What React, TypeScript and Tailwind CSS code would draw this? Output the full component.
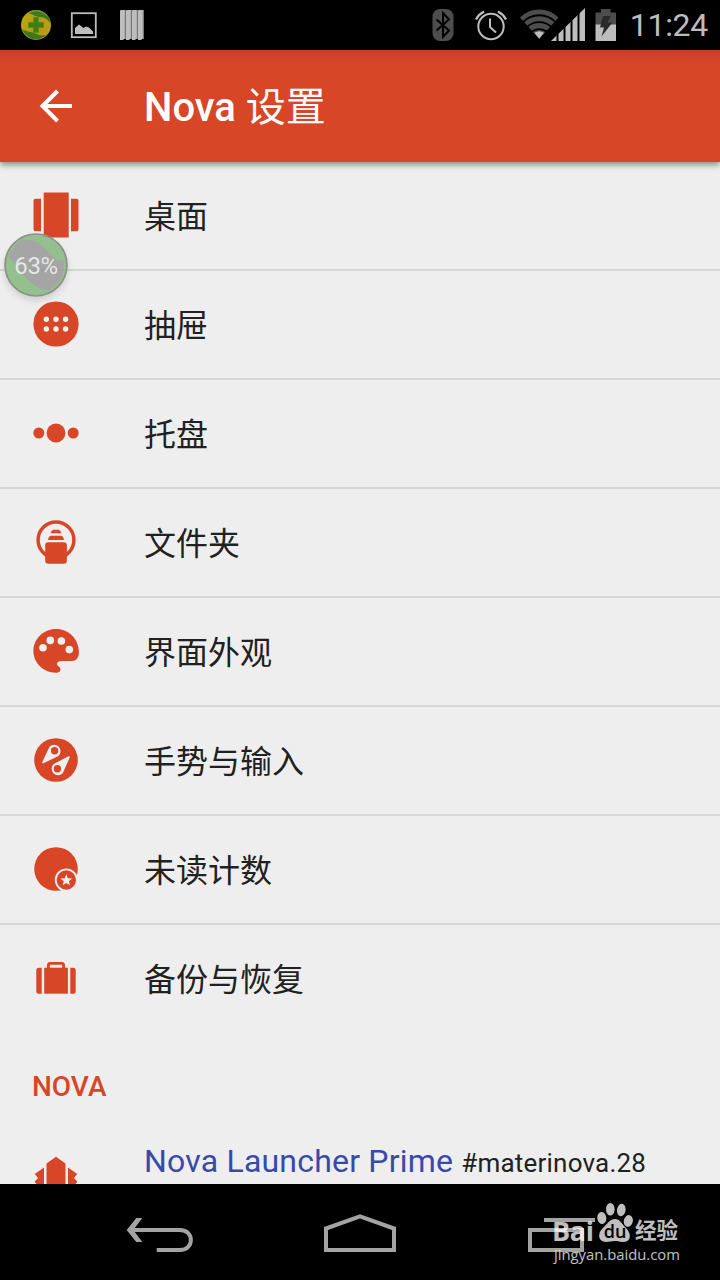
import React from 'react';

const StatusBar: React.FC = () => (
  <div className="h-[50px] bg-black flex items-center justify-between pl-5 pr-3 shrink-0">
    <div className="flex items-center gap-4">
      <svg width="32" height="32" viewBox="0 0 32 32">
        <defs>
          <radialGradient id="ball" cx="0.6" cy="0.6" r="0.7">
            <stop offset="0" stopColor="#c78f10" />
            <stop offset="0.6" stopColor="#b8a018" />
            <stop offset="1" stopColor="#b5a90c" />
          </radialGradient>
        </defs>
        <circle cx="16" cy="16" r="15" fill="url(#ball)" />
        <path d="M8 4C14-1 25 1 29 9c1 2 1 4 1 5-3-5-7-6-11-6-3 0-6-3-11-4Z" fill="#3a7a1c" />
        <path d="M2 20c4 3 8 2 12 4 5 2 7 3 12 2-5 5-13 6-18 2-3-3-5-5-6-8Z" fill="#3a7a1c" />
        <path d="M9 4C15 0 23 2 27 7" fill="none" stroke="#7fa23a" strokeWidth="1" />
        <path d="M13.500 8.500h5v5h5v5h-5v5h-5v-5h-5v-5h5Z" fill="#3f7d17" stroke="#5c8c14" strokeLinejoin="round" />
      </svg>
      <svg width="32" height="32" viewBox="0 0 32 32">
        <rect x="3.800" y="4.200" width="24" height="24" fill="none" stroke="#bdbdbd" strokeWidth="1.800" />
        <path d="M7 25v-6l4-3.500 4.500 3.500 2.500-1.500 3 1 4 4V25Z" fill="#bdbdbd" />
      </svg>
      <svg width="32" height="32" viewBox="0 0 32 32">
        {[4, 10, 16, 22].map((x) => (
          <g key={x}>
            <path d={`M${x} 1.500l1-.5h4.500v29h-1.500l-1 1h-3Z`} fill="#bdbdbd" />
            <path d={`M${x + 5.300} 1v29`} stroke="#7c7c7c" strokeWidth="1" />
          </g>
        ))}
      </svg>
    </div>
    <div className="flex items-center">
      <svg width="22" height="34" viewBox="0 0 22 34" className="mr-5">
        <rect x="0.500" y="1" width="21" height="32" rx="7.500" fill="#4d4d4d" />
        <path d="M4.500 11.500l12.500 11-6 6.500V5l6 6.500-12.500 11" fill="none" stroke="#000" strokeWidth="2" />
      </svg>
      <svg width="34" height="34" viewBox="0 0 34 34" className="mr-3">
        <circle cx="17" cy="18.500" r="12.700" fill="none" stroke="#bdbdbd" strokeWidth="2" />
        <path d="M16 10.500v8.500l6 5.500" fill="none" stroke="#bdbdbd" strokeWidth="2" />
        <path d="M2 11.500A19 19 0 0 1 10 3.500M24 3.500a19 19 0 0 1 8 8" fill="none" stroke="#bdbdbd" strokeWidth="2.500" />
      </svg>
      <svg width="66" height="34" viewBox="0 0 66 34" className="mr-[9px]">
        <path d="M0 9.500A27 27 0 0 1 38.500 9.500L19.200 31Z" fill="#4d4d4d" />
        <path d="M2.500 14.500A23 23 0 0 1 36 14.500M6.500 19.500a18 18 0 0 1 25.500 0M11 24.500a12 12 0 0 1 16.500 0" fill="none" stroke="#000" strokeWidth="1.800" />
        <path d="M14.500 24.800q4.700-3 9.400 0l-4.700 6Z" fill="#bdbdbd" />
        <path d="M31 33l34-33v33Z" fill="#bdbdbd" />
        <path d="M37.500 20v14M44.500 14v20M51.500 8v26M58.500 3v31" stroke="#000" strokeWidth="2" />
      </svg>
      <svg width="22" height="34" viewBox="0 0 22 34" className="mr-[13px]">
        <path d="M0.500 4.500h5.500V1h9.500v3.500h5.500V17H0.500Z" fill="#4d4d4d" />
        <path d="M0.500 16.500h20.500V33H0.500Z" fill="#bdbdbd" />
        <path d="M8 8h8l-3.500 6.500h5L6.500 28.500l2.500-9H5Z" fill="#2b2b2b" />
      </svg>
      <span className="text-[32px] leading-[52px] text-[#bdbdbd] tracking-[-0.3px]">11:24</span>
    </div>
  </div>
);

const Icon: React.FC<{ children: React.ReactNode }> = ({ children }) => (
  <svg width="48" height="48" viewBox="0 0 48 48" fill="#d74627" className="mt-[29px] shrink-0">
    {children}
  </svg>
);

const SETTINGS = [
  {
    label: '桌面',
    icon: (
      <>
        <path d="M9 7.700H3.500a2 2 0 0 0-2 2v28.600a2 2 0 0 0 2 2H9ZM39 7.700h5.500a2 2 0 0 1 2 2v28.600a2 2 0 0 1-2 2H39Z" />
        <rect x="11.700" y="1.500" width="25" height="45" />
      </>
    ),
  },
  {
    label: '抽屉',
    icon: (
      <>
        <circle cx="24" cy="24" r="22.600" />
        {[14.300, 24, 33.600].map((x) => (
          <g key={x} fill="#eee">
            <circle cx={x} cy="19.200" r="2.700" />
            <circle cx={x} cy="29" r="2.700" />
          </g>
        ))}
      </>
    ),
  },
  {
    label: '托盘',
    icon: (
      <>
        <circle cx="6.800" cy="24" r="5.500" />
        <circle cx="24" cy="24" r="9.400" />
        <circle cx="41.200" cy="24" r="5.500" />
      </>
    ),
  },
  {
    label: '文件夹',
    icon: (
      <>
        <circle cx="24" cy="22" r="17.900" fill="none" stroke="#d74627" strokeWidth="3.500" />
        <rect x="13.200" y="24.200" width="21.700" height="21.500" rx="3" />
        <path d="M16 22c.5-3 1.500-4.200 3.500-4.200h9c2 0 3 1.200 3.500 4.200ZM18.500 15.200c.8-2.500 2-3.500 3.500-3.500h4c1.500 0 2.700 1 3.500 3.500Z" />
      </>
    ),
  },
  {
    label: '界面外观',
    icon: (
      <>
        <path d="M24 45.700C11.500 45.700 1.400 36 1.400 24S11.500 2 24 2C37 2 46.900 12 46.900 25.500c0 5.500-2.800 8.500-7 8.500H30c-3 0-5 .8-5 3 0 2.500 3.500 2.500 3.500 5.500 0 2-1.500 3.200-4.500 3.200Z" />
        <g fill="#eee">
          <circle cx="11" cy="20.700" r="3.800" />
          <circle cx="18.300" cy="13.400" r="3.800" />
          <circle cx="29.400" cy="14" r="3.800" />
          <circle cx="37.300" cy="22.600" r="3.800" />
        </g>
      </>
    ),
  },
  {
    label: '手势与输入',
    icon: (
      <>
        <circle cx="24" cy="24" r="21.800" />
        <path d="M17.600 10.500A6.500 6.500 0 1 1 26.500 20L11.500 27.200c-1 .4-1.700-.3-1.200-1.200Z" fill="#eee" />
        <path d="M30.600 37.500A6.500 6.500 0 1 1 21.700 28L36.500 20.300c1-.4 1.700.3 1.200 1.200Z" fill="#eee" />
        <circle cx="22.600" cy="14.700" r="3.700" />
        <circle cx="25.400" cy="32.800" r="3.700" />
      </>
    ),
  },
  {
    label: '未读计数',
    icon: (
      <>
        <circle cx="24" cy="24" r="21.800" />
        <circle cx="34.300" cy="35" r="11.500" fill="#eee" />
        <circle cx="34.300" cy="35" r="9.700" />
        <path d="M34.300 29.300l1.600 3.900 4.200.3-3.200 2.700 1 4.100-3.600-2.200-3.600 2.200 1-4.100-3.200-2.700 4.200-.3Z" fill="#eee" />
      </>
    ),
  },
  {
    label: '备份与恢复',
    icon: (
      <>
        <path d="M9.700 13.700H6.800a2.500 2.500 0 0 0-2.500 2.500v21a2.500 2.500 0 0 0 2.500 2.500h2.900ZM38.300 13.700h2.900a2.500 2.500 0 0 1 2.500 2.500v21a2.500 2.500 0 0 1-2.500 2.500h-2.900Z" />
        <rect x="12.200" y="13.700" width="23.700" height="26" />
        <path d="M16.400 14.500V11a1.700 1.700 0 0 1 1.700-1.700h11.800a1.700 1.700 0 0 1 1.700 1.700v3.500" fill="none" stroke="#d74627" strokeWidth="2.800" />
      </>
    ),
  },
];

const BatteryBubble: React.FC = () => (
  <div className="absolute left-1 top-[233px] w-16 h-16 rounded-full shadow-[0_4px_6px_rgba(0,0,0,0.12)]">
    <svg width="64" height="64" viewBox="0 0 64 64" className="absolute inset-0">
      <circle cx="32" cy="32" r="31" fill="#8b8b8b" fillOpacity="0.74" />
      <path d="M18 7C34-1 60 6 60 27c-11 1-11-5-19-12C35 9 28 6 18 7Z" fill="#8fc787" fillOpacity="0.8" />
      <path d="M4 22c-5 20 7 39 26 39 6 0 11-1 15-4-10 0-18-6-25-15C16 36 9 30 4 22Z" fill="#8fc787" fillOpacity="0.8" />
      <circle cx="32" cy="32" r="29.200" fill="none" stroke="#8fc787" strokeOpacity="0.7" strokeWidth="2" />
      <circle cx="32" cy="32" r="31" fill="none" stroke="#8c918c" strokeWidth="1.700" />
    </svg>
    <span className="relative block text-center text-[24px] leading-[67px] tracking-[-0.4px] text-[#e6e6e6]">63%</span>
  </div>
);

const NavBar: React.FC = () => (
  <div className="relative h-24 bg-black grid grid-cols-3 justify-items-center px-[60px] shrink-0">
    <svg width="72" height="96" viewBox="0 0 72 96" fill="none" stroke="#a3a3a3" strokeWidth="4">
      <path d="M6 46h50c14.500 0 14.500 20 0 20H32.700" />
      <path d="M2.700 46l9.600-12h6L9.300 46l9 12h-6Z" fill="#a3a3a3" stroke="none" />
    </svg>
    <svg width="72" height="96" viewBox="0 0 72 96" fill="none" stroke="#a3a3a3" strokeWidth="4">
      <path d="M2 66V44.500L36 32.300 70 44.500V66Z" />
    </svg>
    <svg width="72" height="96" viewBox="0 0 72 96" fill="none" stroke="#a3a3a3" strokeWidth="4">
      <rect x="6" y="46" width="52" height="20" />
      <path d="M20 36h51" />
    </svg>

    {/* Site watermark */}
    <div className="absolute left-[552px] top-[18px] w-[130px] text-white opacity-75">
      <div className="flex items-start h-[41px]">
        <span className="font-['Open_Sans'] font-bold text-[27px] leading-[30px] mt-[14px] tracking-[-0.3px] w-[43px]">Bai</span>
        <svg width="40" height="42" viewBox="0 0 40 42" fill="currentColor" className="ml-0.5 -mr-0.5">
          <ellipse cx="4.800" cy="16" rx="4.500" ry="6" transform="rotate(-8 4.800 16)" />
          <ellipse cx="13.300" cy="7.300" rx="4.300" ry="6.300" />
          <ellipse cx="24.300" cy="8" rx="4.300" ry="6.300" transform="rotate(8 24.300 8)" />
          <ellipse cx="31.300" cy="19" rx="4.500" ry="6" transform="rotate(12 31.300 19)" />
          <path d="M18 17c5 0 7 5 11 9 6 6 5 14-3 14-4 0-4-1-8-1s-5 1-9 1c-8 0-9-9-3-14 4-4 7-9 12-9Z" />
          <text x="18" y="36" textAnchor="middle" fill="#000" fontSize="18" fontWeight="600" fontFamily="Open Sans">du</text>
        </svg>
        <span className="font-bold text-[21.500px] leading-[30px] mt-[14px] whitespace-nowrap">经验</span>
      </div>
      <p className="font-['Open_Sans'] text-[14.800px] leading-[22px] ml-0.5 whitespace-nowrap">jingyan.baidu.com</p>
    </div>
  </div>
);

export default function App() {
  return (
    <div className="relative w-[720px] h-[1280px] overflow-hidden flex flex-col bg-[#eee] font-[Roboto,'Noto_Sans_CJK_SC',sans-serif]">
      <StatusBar />

      <header className="relative z-10 h-28 shrink-0 flex items-center bg-linear-to-b from-[#c64124] to-[#d74627] to-12% shadow-[0_3px_6px_rgba(0,0,0,0.4)]">
        <svg width="34" height="34" viewBox="0 0 34 34" fill="none" stroke="#fff" strokeWidth="4" className="ml-[39px] mr-[71px]">
          <path d="M33 17H4M18.500 2L3.500 17l15 15" />
        </svg>
        <h1 className="pt-1 text-[40px] font-medium text-white">
          Nova <span className="font-normal">设置</span>
        </h1>
      </header>

      <main className="flex-1 min-h-0 overflow-hidden">
        {SETTINGS.map((item, i) => (
          <div
            key={item.label}
            className={`h-[109px] flex items-start pl-8 border-[#d6d6d6] ${i < SETTINGS.length - 1 ? 'border-b-2' : ''}`}
          >
            <Icon>{item.icon}</Icon>
            <span className="ml-16 text-[32px] leading-[111px] text-[#212121]">{item.label}</span>
          </div>
        ))}

        <h2 className="h-[94px] pl-8 text-[28px] leading-[106px] font-medium text-[#d74627]">NOVA</h2>

        <div className="flex items-start pl-8">
          <svg width="48" height="48" viewBox="0 0 48 48" fill="#d74627" className="mt-[27px] shrink-0">
            <path d="M14.500 48V8.500L24 1.700l9.500 6.800V48ZM12 12.500V48H5.500v-18L2.700 27l0-.5L6 23l-3.300-4ZM36 12.500V48h6.500v-18l2.800-3v-.5L42 23l3.300-4Z" />
          </svg>
          <p className="ml-16 mt-2 text-[32px] leading-[50px] tracking-[0.2px] text-[#3949ab] whitespace-nowrap">
            Nova Launcher Prime <span className="text-[26px] text-[#212121]">#materinova.28</span>
          </p>
        </div>
      </main>

      <NavBar />
      <BatteryBubble />
    </div>
  );
}
